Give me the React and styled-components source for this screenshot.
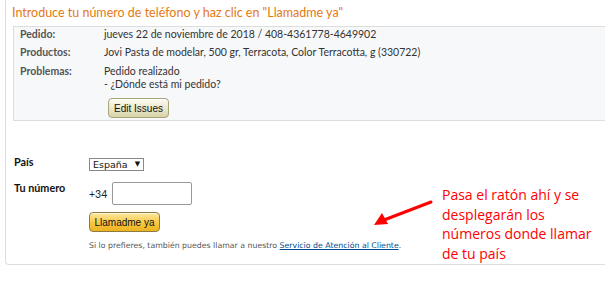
import React from 'react'
import styled, { createGlobalStyle } from 'styled-components'

const Global = createGlobalStyle`
  body {
    margin: 0;
    background: #fff;
    font-family: Lato, 'Noto Sans', Arial, sans-serif;
  }
`

const Page = styled.div`
  position: relative;
  width: 605px;
  height: 291px;
  overflow: hidden;
`

const Frame = styled.section`
  margin-left: 5px;
  margin-top: -4px;
  height: 269px;
  box-sizing: border-box;
  border-left: 1px solid #ddd;
  border-bottom: 1px solid #ddd;
  border-bottom-left-radius: 4px;
  padding: 8px 0 0 6px;
`

const Title = styled.h2`
  margin: 0;
  font-size: 12.5px;
  font-weight: normal;
  color: #e47911;
  line-height: 18px;
`

const OrderBox = styled.div`
  margin-top: 4px;
  margin-left: 1px;
  margin-right: -20px;
  background: #f7f8fa;
  border: 1px solid #ddd;
  height: 95px;
  box-sizing: border-box;
  padding: 1px 0 0 6px;
`

const Row = styled.div`
  display: grid;
  grid-template-columns: 84px 1fr;
  font-size: 10.5px;
  line-height: 13px;
  color: #333;
  margin-bottom: ${p => p.gap ?? 5}px;
`

const Label = styled.span`
  font-weight: bold;
  color: #555;
`

const Value = styled.div``

const OldButton = styled.button`
  display: block;
  margin-top: 7px;
  margin-left: 4px;
  width: 61px;
  height: 20px;
  padding: 0;
  font-family: 'Liberation Sans', Arial, sans-serif;
  font-size: 10px;
  color: #111;
  border: 1px solid #a8a37a;
  border-radius: 4px;
  background: linear-gradient(#fbfaf0, #e9e6c8 60%, #d6d1a6);
  box-shadow: inset 0 1px 0 #fff;
`

const Form = styled.div`
  margin-top: 34px;
  padding-left: 2px;
`

const Field = styled.div`
  display: flex;
  align-items: flex-start;
  margin-top: ${p => p.top || 0}px;
`

const FormLabel = styled.span`
  width: 75px;
  flex: none;
  font-size: 10.8px;
  font-weight: bold;
  color: #111;
  line-height: 14px;
`

const Select = styled.div`
  display: flex;
  align-items: center;
  gap: 7px;
  margin-top: 3px;
  height: 11px;
  padding: 0 3px;
  border: 1px solid #888;
  font-family: 'DejaVu Sans', sans-serif;
  font-size: 9.5px;
  color: #111;
  line-height: 11px;
`

const Arrow = styled.span`
  font-size: 7px;
`

const Phone = styled.div`
  display: flex;
  align-items: center;
  gap: 5px;
  margin-top: 1px;
  font-size: 10.5px;
  color: #222;
`

const Input = styled.input`
  width: 80px;
  height: 23px;
  box-sizing: border-box;
  border: 1px solid #999;
  border-radius: 2px;
`

const Actions = styled.div`
  margin-left: 75px;
  margin-top: 7px;
`

const CallButton = styled.button`
  display: block;
  width: 71px;
  height: 20px;
  padding: 0;
  font-family: 'Liberation Sans', Arial, sans-serif;
  font-size: 10px;
  color: #111;
  border: 1px solid #8d7a3e;
  border-radius: 4px;
  background: linear-gradient(#fde9a3, #f7c948 50%, #eeb21e);
  box-shadow: inset 0 1px 0 #fff6d4;
`

const Note = styled.p`
  margin: 9px 0 0;
  font-family: 'DejaVu Sans', Verdana, sans-serif;
  font-size: 7.8px;
  line-height: 10px;
  color: #555;
  a {
    color: #004b91;
    text-decoration: underline;
  }
`

const Annotation = styled.div`
  position: absolute;
  left: 442px;
  top: 185px;
  width: 150px;
  font-family: 'Open Sans', sans-serif;
  font-size: 14px;
  line-height: 19.7px;
  color: #f00;
`

const Pointer = styled.svg`
  position: absolute;
  left: 370px;
  top: 196px;
`

const App = () => {
  return (
    <Page>
      <Global />
      <Frame>
        <Title>Introduce tu número de teléfono y haz clic en "Llamadme ya"</Title>
        <OrderBox>
          <Row>
            <Label>Pedido:</Label>
            <Value>jueves 22 de noviembre de 2018 / 408-4361778-4649902</Value>
          </Row>
          <Row gap={6}>
            <Label>Productos:</Label>
            <Value>Jovi Pasta de modelar, 500 gr, Terracota, Color Terracotta, g (330722)</Value>
          </Row>
          <Row gap={0}>
            <Label>Problemas:</Label>
            <Value>
              Pedido realizado
              <br />- ¿Dónde está mi pedido?
              <OldButton>Edit Issues</OldButton>
            </Value>
          </Row>
        </OrderBox>
        <Form>
          <Field>
            <FormLabel>País</FormLabel>
            <Select>
              España <Arrow>▼</Arrow>
            </Select>
          </Field>
          <Field top={10}>
            <FormLabel>Tu número</FormLabel>
            <Phone>
              +34 <Input />
            </Phone>
          </Field>
          <Actions>
            <CallButton>Llamadme ya</CallButton>
            <Note>
              Si lo prefieres, también puedes llamar a nuestro <a>Servicio de Atención al Cliente</a>.
            </Note>
          </Actions>
        </Form>
      </Frame>
      <Annotation>
        Pasa el ratón ahí y se desplegarán los números donde llamar de tu país
      </Annotation>
      <Pointer width="64" height="34" viewBox="0 0 64 34">
        <line x1="61" y1="6" x2="14" y2="24" stroke="#f00" strokeWidth="3" strokeLinecap="round" />
        <polygon points="4,29 12,17 18,28" fill="#f00" />
      </Pointer>
    </Page>
  )
}

export default App
